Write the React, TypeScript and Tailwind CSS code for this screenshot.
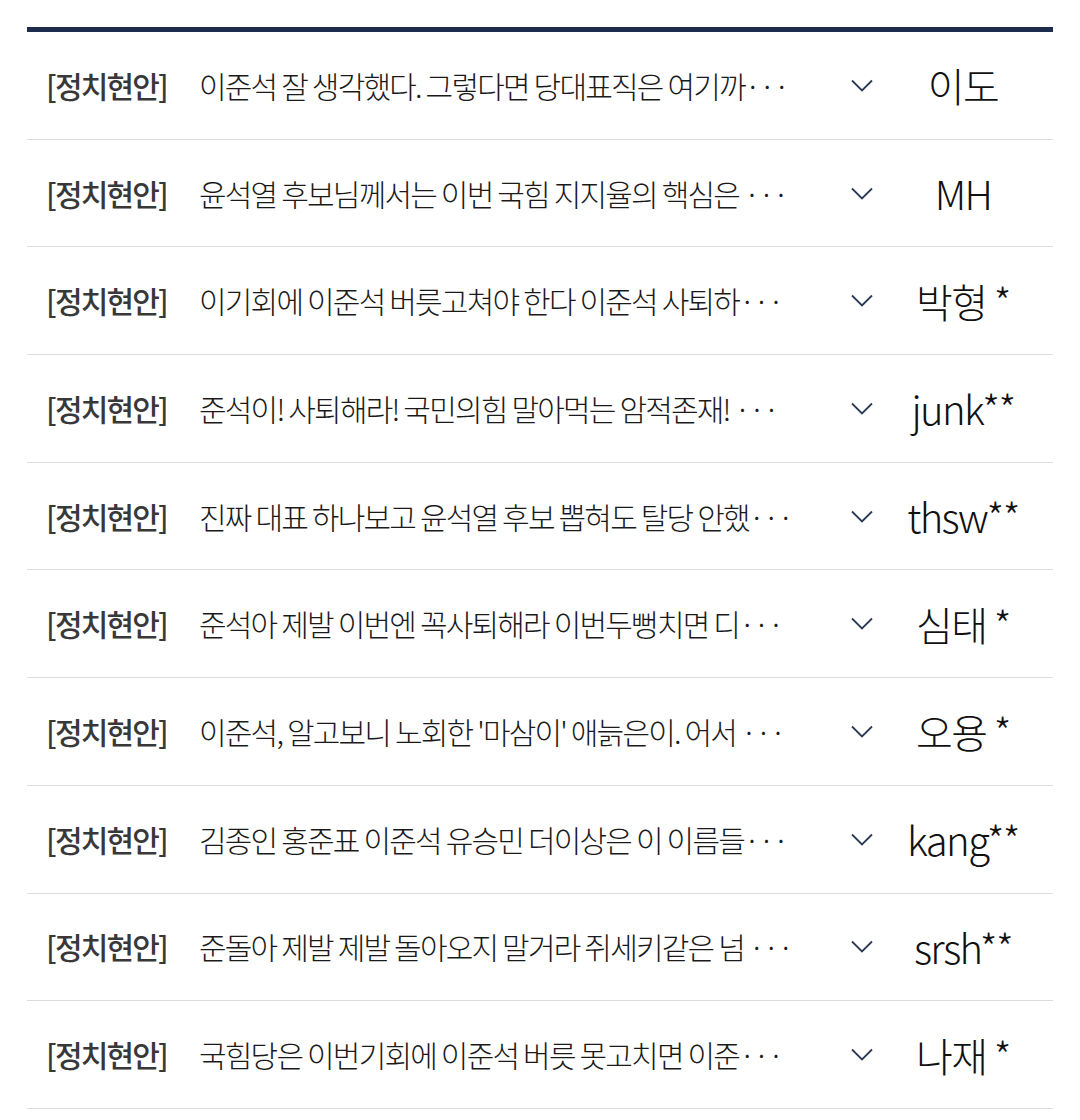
const ROWS = [
    { title: '이준석 잘 생각했다. 그렇다면 당대표직은 여기까', author: '이도' },
    { title: '윤석열 후보님께서는 이번 국힘 지지율의 핵심은 ', author: 'MH' },
    { title: '이기회에 이준석 버릇고쳐야 한다 이준석 사퇴하', author: '박형 *' },
    { title: '준석이! 사퇴해라! 국민의힘 말아먹는 암적존재! ', author: 'junk**' },
    { title: '진짜 대표 하나보고 윤석열 후보 뽑혀도 탈당 안했', author: 'thsw**' },
    { title: '준석아 제발 이번엔 꼭사퇴해라 이번두뻥치면 디', author: '심태 *' },
    { title: "이준석, 알고보니 노회한 '마삼이' 애늙은이. 어서 ", author: '오용 *' },
    { title: '김종인 홍준표 이준석 유승민 더이상은 이 이름들', author: 'kang**' },
    { title: '준돌아 제발 제발 돌아오지 말거라 쥐세키같은 넘 ', author: 'srsh**' },
    { title: '국힘당은 이번기회에 이준석 버릇 못고치면 이준', author: '나재 *' },
];

const FONT = "font-['Noto_Sans_CJK_KR','Noto_Sans',sans-serif]";

function Chevron() {
    return (
        <svg width="22" height="13" viewBox="0 0 22 13" fill="none">
            <path d="M1 1.5 L11 11.5 L21 1.5" stroke="#2b3a55" strokeWidth="1.8" />
        </svg>
    );
}

export default function App() {
    return (
        <div className={`w-[1080px] h-[1120px] bg-white ${FONT}`}>
            <div className="pt-[27px] px-[27px]">
                <div className="border-t-[5px] border-[#1d2c4c]">
                    {ROWS.map((row, i) => (
                        <div
                            key={i}
                            className="flex items-center h-[107.7px] border-b-[1.5px] border-[#dcdcdc] pl-[19px]"
                        >
                            <span className="w-[153px] shrink-0 text-[30px] font-medium text-[#383838] tracking-[-0.06em]">
                                [정치현안]
                            </span>
                            <span className="w-[625px] shrink-0 whitespace-nowrap overflow-hidden text-[30px] font-light text-[#1a1a1a] tracking-[-0.06em]">
                                {row.title}···
                            </span>
                            <span className="ml-[27px] w-[22px] flex items-center">
                                <Chevron />
                            </span>
                            <span className="w-[180px] text-center text-[40px] font-light text-[#111] tracking-[-0.04em]">
                                {row.author}
                            </span>
                        </div>
                    ))}
                </div>
            </div>
        </div>
    );
}
